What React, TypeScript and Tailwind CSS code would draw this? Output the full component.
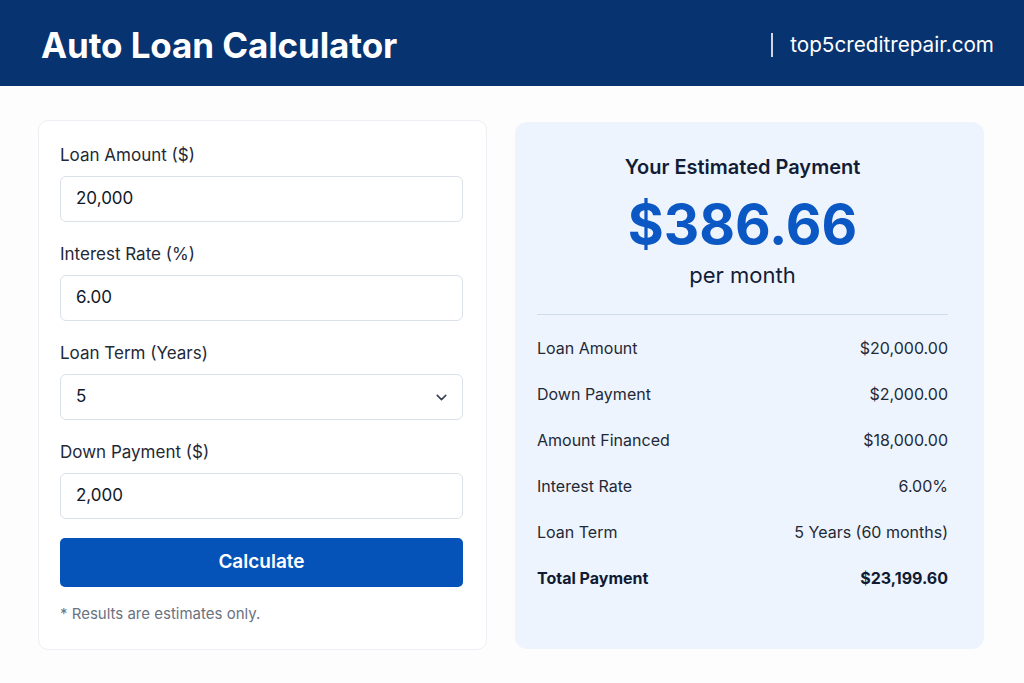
import React from 'react';
import { ChevronDown } from 'lucide-react';

const Field: React.FC<{ label: string; value: string; select?: boolean }> = ({ label, value, select }) => (
  <div className="flex flex-col">
    <label className="text-[17px] leading-[24px] text-[#1f2937] mb-[9px]">{label}</label>
    <div className="h-[46px] rounded-[6px] border border-[#dbe1e8] bg-white flex items-center justify-between pl-[15px] pr-[12px]">
      <span className="text-[17px] text-[#111827]">{value}</span>
      {select && <ChevronDown className="w-[17px] h-[17px] text-[#374151]" strokeWidth={2.2} />}
    </div>
  </div>
);

const Row: React.FC<{ label: string; value: string; bold?: boolean }> = ({ label, value, bold }) => (
  <div
    className={`flex justify-between items-center h-[46px] text-[16px] ${
      bold ? 'font-bold text-[#111a33]' : 'text-[#1f2937]'
    }`}
  >
    <span>{label}</span>
    <span>{value}</span>
  </div>
);

export default function App() {
  const rows = [
    { label: 'Loan Amount', value: '$20,000.00' },
    { label: 'Down Payment', value: '$2,000.00' },
    { label: 'Amount Financed', value: '$18,000.00' },
    { label: 'Interest Rate', value: '6.00%' },
    { label: 'Loan Term', value: '5 Years (60 months)' },
  ];

  return (
    <div className="w-[1024px] h-[683px] bg-[#fdfdfd] font-['Inter',sans-serif] overflow-hidden">
      {/* header */}
      <header className="h-[86px] bg-[#083371] flex items-center justify-between pl-[41px] pr-[30px]">
        <h1 className="text-[35px] font-bold text-white tracking-[-0.1px] pt-[5px]">Auto Loan Calculator</h1>
        <div className="flex items-center gap-[17px] text-white pt-[4px]">
          <span className="w-[2px] h-[24px] bg-white/80" />
          <span className="text-[20.7px]">top5creditrepair.com</span>
        </div>
      </header>

      <main className="flex gap-[28px] px-[38px] pt-[34px]">
        {/* form card */}
        <section className="w-[449px] h-[530px] rounded-[10px] border border-[#eceff3] bg-white pl-[21px] pr-[23px] pt-[22px]">
          <div className="flex flex-col gap-[20px]">
            <Field label="Loan Amount ($)" value="20,000" />
            <Field label="Interest Rate (%)" value="6.00" />
            <Field label="Loan Term (Years)" value="5" select />
            <Field label="Down Payment ($)" value="2,000" />
          </div>
          <button className="mt-[19px] w-full h-[49px] rounded-[5px] bg-[#0552b9] text-white text-[19px] font-semibold">
            Calculate
          </button>
          <p className="mt-[16px] text-[15px] text-[#6b7280]">* Results are estimates only.</p>
        </section>

        {/* results card */}
        <section className="w-[469px] h-[527px] mt-[2px] rounded-[12px] bg-[#edf4fd] pl-[22px] pr-[36px] pt-[30px]">
          <div className="flex flex-col items-center">
            <h2 className="text-[20px] font-semibold text-[#131c36]">Your Estimated Payment</h2>
            <div className="text-[55px] leading-[64px] font-bold text-[#0b57c4] mt-[10px]">$386.66</div>
            <div className="text-[22px] text-[#131c36] mt-[3px]">per month</div>
          </div>
          <div className="mt-[22px] border-t border-[#cfdced]" />
          <div className="mt-[10px] flex flex-col">
            {rows.map((r) => (
              <Row key={r.label} label={r.label} value={r.value} />
            ))}
            <Row label="Total Payment" value="$23,199.60" bold />
          </div>
        </section>
      </main>
    </div>
  );
}
